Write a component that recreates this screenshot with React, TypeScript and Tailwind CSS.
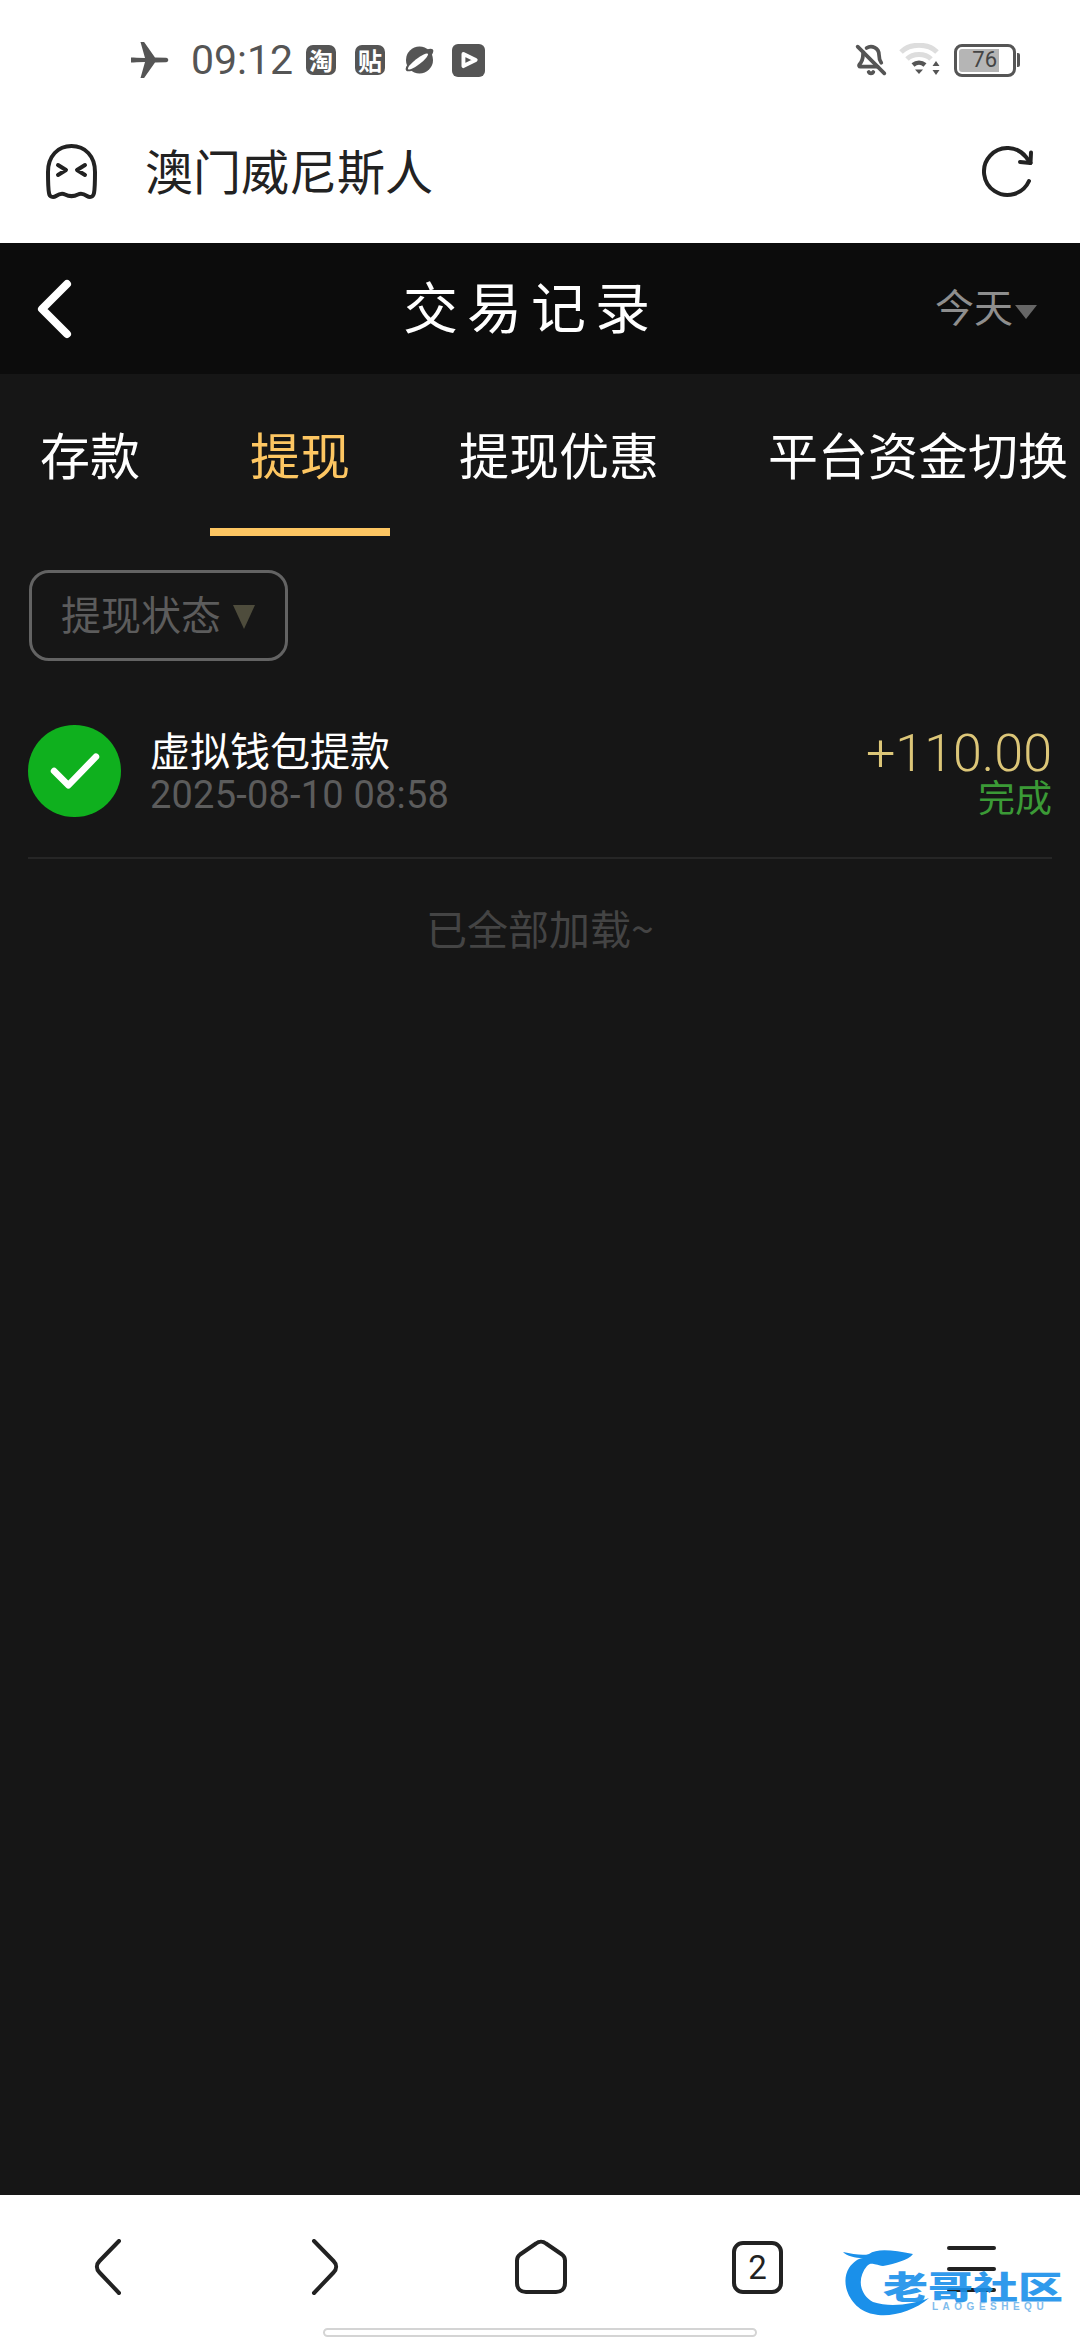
import React from 'react';
import { BellOff } from 'lucide-react';

const tabs = [
  { label: '存款', className: 'ml-[40px]' },
  { label: '提现', className: 'ml-[70px] w-[180px] justify-center', active: true },
  { label: '提现优惠', className: 'ml-[69px]' },
  { label: '平台资金切换', className: 'ml-[109px]' },
];

const StatusBar = () => (
  <div className="h-[100px] pt-[20px] flex items-center bg-white text-[#555555]">
    <svg className="ml-[131px] w-[38px] h-[36px]" viewBox="0 0 38 36" fill="#555555">
      <path d="M0 15.5h2.5l3 .2 8.5.3L9.5 0h3.6L24 15.6l11 .2c3 .1 3 4.300 0 4.400l-11 .2L13.100 36H9.500l4.500-16-8.500.3-3 .2H0z" />
    </svg>
    <span className="ml-[22px] w-[101px] text-[41px] leading-none font-['Roboto',sans-serif] whitespace-nowrap">09:12</span>
    <span className="ml-[14px] w-[30px] h-[30px] rounded-[7px] bg-[#555555] text-white text-[24px] leading-[30px] font-bold text-center font-['Noto_Sans_CJK_SC',sans-serif]">淘</span>
    <span className="ml-[19px] w-[30px] h-[30px] rounded-[7px] bg-[#555555] text-white text-[24px] leading-[30px] font-bold text-center font-['Noto_Sans_CJK_SC',sans-serif]">贴</span>
    <svg className="ml-[18px] w-[33px] h-[30px]" viewBox="0 0 33 30">
      <circle cx="16.500" cy="15" r="13.500" fill="#555555" />
      <ellipse cx="16.500" cy="15" rx="17" ry="5.500" transform="rotate(-38 16.500 15)" fill="#555555" />
      <ellipse cx="15" cy="16.500" rx="12.500" ry="3" transform="rotate(-38 15 16.500)" fill="#ffffff" />
    </svg>
    <div className="ml-[16px] w-[33px] h-[33px] rounded-[6px] bg-[#555555] flex items-center justify-center">
      <svg className="w-[20px] h-[20px]" viewBox="0 0 18 18">
        <path d="M4 3.500 15 9 4 14.500z" fill="#555555" stroke="#ffffff" strokeWidth="3.500" strokeLinejoin="round" />
      </svg>
    </div>
    <BellOff className="ml-auto w-[32px] h-[34px]" strokeWidth={2.8} color="#555555" />
    <svg className="ml-[12px] w-[44px] h-[34px]" viewBox="0 0 44 34" fill="none">
      <path d="M2 9C11 0 29 0 38 9" stroke="#dddddd" strokeWidth="5" />
      <path d="M8 16C14 10 26 10 32 16" stroke="#dddddd" strokeWidth="5" />
      <path d="M14 22C17.500 19 22.500 19 26 22" stroke="#555555" strokeWidth="4.500" />
      <path d="M16 26.500h8L20 31z" fill="#555555" />
      <path d="M37 18l3.500 5h-7zM37 32l3.500-5h-7z" fill="#555555" />
    </svg>
    <div className="ml-[11px] mr-[60px] flex items-center">
      <div className="w-[62px] h-[33px] rounded-[8px] border-[3px] border-[#555555] p-[2px] flex">
        <div className="w-[40px] h-full bg-[#b5b5b5] rounded-l-[3px] flex items-center justify-end">
          <span className="text-[22px] leading-none text-[#444444] font-['Roboto',sans-serif] pr-[2px]">76</span>
        </div>
      </div>
      <div className="ml-[1px] w-[3px] h-[14px] bg-[#555555] rounded-r-[2px]"></div>
    </div>
  </div>
);

const UrlBar = () => (
  <div className="h-[143px] flex items-center bg-white">
    <svg className="ml-[45px] w-[53px] h-[56px]" viewBox="0 0 53 56" fill="none" stroke="#222222" strokeWidth="4" strokeLinecap="round" strokeLinejoin="round">
      <path d="M3 28C3 12 13 2 26.500 2S50 12 50 28c0 10 0 16-1 21-.6 4-4 5-7 3-3-2-6-3-9-1.500-4 2-9 2-13 0-3-1.500-6-.5-9 1.500-3 2-6.500 1-7-3-1-5-1-11-1-21z" />
      <path d="M13 21l8 5-8 5M40 21l-8 5 8 5" />
    </svg>
    <span className="ml-[47px] pb-[5px] text-[48px] leading-none text-[#222222] font-['Noto_Sans_CJK_SC',sans-serif] whitespace-nowrap">澳门威尼斯人</span>
    <svg className="ml-auto mr-[46px] w-[52px] h-[52px]" viewBox="0 0 52 52" fill="none" stroke="#222222" strokeWidth="4" strokeLinecap="round" strokeLinejoin="round">
      <path d="M47 35A23.500 23.500 0 1 1 44 11L48.500 17" />
      <path d="M49 6.500 48.500 17 38 16" />
    </svg>
  </div>
);

const NavBar = () => (
  <div className="h-[131px] bg-[#0c0c0c] flex items-center">
    <svg className="ml-[36px] w-[36px] h-[60px]" viewBox="0 0 36 60" fill="none" stroke="#ffffff" strokeWidth="8" strokeLinecap="round" strokeLinejoin="round">
      <path d="M31 5 6 30l25 25" />
    </svg>
    <span className="ml-[331px] pb-[9px] text-[55px] leading-none tracking-[9px] text-white font-['Noto_Sans_CJK_SC',sans-serif] whitespace-nowrap">交易记录</span>
    <span className="ml-auto pb-[6px] text-[39px] leading-none text-[#8e8e8e] font-['Noto_Sans_CJK_SC',sans-serif]">今天</span>
    <div className="ml-[2px] mr-[43px] mt-[6px] w-0 h-0 border-x-[11px] border-x-transparent border-t-[14px] border-t-[#666666]"></div>
  </div>
);

const NavIcon = ({ d, className }: { d: string; className: string }) => (
  <svg className={className} viewBox="0 0 52 56" fill="none" stroke="#222222" strokeWidth="4" strokeLinecap="round" strokeLinejoin="round">
    <path d={d} />
  </svg>
);

const BottomBar = () => (
  <div className="relative h-[145px] bg-white">
    <div className="flex items-center h-[144px]">
      <NavIcon className="ml-[82px] w-[52px] h-[56px]" d="M37 2 17.500 22c-3.500 3.500-3.500 8 0 11.500L37 54" />
      <NavIcon className="ml-[165px] w-[52px] h-[56px]" d="M15 2l19.500 20c3.500 3.500 3.500 8 0 11.500L15 54" />
      <NavIcon className="ml-[164px] w-[52px] h-[56px]" d="M21 4.500 5 15.500C3 17 2 19 2 21.500V44c0 6 4 9 9 9h30c5 0 9-3 9-9V21.500c0-2.500-1-4.500-3-6L31 4.500c-3-2.500-7-2.500-10 0z" />
      <div className="ml-[165px] w-[51px] h-[53px] rounded-[11px] border-[4px] border-[#222222] flex items-center justify-center text-[33px] leading-none text-[#222222] font-['Roboto',sans-serif]">2</div>
      <div className="ml-[164px] mt-[4px] w-[49px] flex flex-col gap-[17px]">
        <div className="h-[4px] rounded-full bg-[#222222]"></div>
        <div className="h-[4px] rounded-full bg-[#222222]"></div>
        <div className="h-[4px] rounded-full bg-[#222222]"></div>
      </div>
    </div>
    <div className="absolute left-[323px] bottom-[3px] w-[434px] h-[9px] rounded-full bg-white border-[2px] border-[#d4d4d4]"></div>
    {/* watermark over the menu button */}
    <div className="absolute left-[843px] top-[49px] w-[220px] h-[72px]">
      <svg className="absolute inset-0 w-[90px] h-[72px]" viewBox="0 0 90 72">
        <path d="M0 8C10 10 20 12 26 10 34 4 50 6 70 10 66 16 50 20 40 22 30 20 28 18 24 22 14 34 16 50 30 58 48 64 70 60 86 54 70 68 46 74 30 70 8 66-4 40 6 24 10 18 16 14 20 14 12 14 4 12 0 8z" fill="#1a90ea" />
      </svg>
      <span className="absolute left-[40px] top-[19px] text-[45px] leading-none font-black text-[#1a90ea] whitespace-nowrap scale-y-[0.7] font-['Noto_Sans_CJK_SC',sans-serif] opacity-90">老哥社区</span>
      <span className="absolute left-[89px] top-[58px] text-[10px] leading-none font-bold tracking-[4.500px] text-[#7fbcec] whitespace-nowrap font-['Liberation_Sans',sans-serif]">LAOGESHEQU</span>
    </div>
  </div>
);

export default function App() {
  return (
    <div className="w-[1080px] h-[2340px] flex flex-col overflow-hidden bg-[#161616] font-['Roboto','Noto_Sans_CJK_SC',sans-serif]">
      <StatusBar />
      <UrlBar />
      <NavBar />

      <div className="flex-1 font-['Noto_Sans_CJK_SC',sans-serif]">
        <div className="h-[162px] flex whitespace-nowrap">
          {tabs.map((tab) => (
            <div
              key={tab.label}
              className={`relative flex items-center pb-[5px] text-[50px] leading-none ${tab.active ? 'text-[#fdc662]' : 'text-white'} ${tab.className}`}
            >
              {tab.label}
              {tab.active && <div className="absolute left-0 right-0 bottom-0 h-[8px] bg-[#fdc662]"></div>}
            </div>
          ))}
        </div>

        <div className="ml-[29px] mt-[34px] w-[259px] h-[91px] rounded-[20px] border-[3px] border-[#636363] flex items-center pl-[29px]">
          <span className="pb-[6px] text-[40px] leading-none text-[#5c5c5c] whitespace-nowrap">提现状态</span>
          <div className="ml-[12px] mt-[2px] w-0 h-0 border-x-[11px] border-x-transparent border-t-[24px] border-t-[#4e4c3c]"></div>
        </div>

        <div className="mx-[28px] mt-[64px] h-[134px] flex border-b-[2px] border-[#262626]">
          <div className="w-[93px] h-[92px] rounded-full bg-[#0fb01e] flex items-center justify-center">
            <svg className="w-[50px] h-[38px]" viewBox="0 0 52 40" fill="none" stroke="#ffffff" strokeWidth="7" strokeLinecap="round" strokeLinejoin="round">
              <path d="M4 20 19 35 48 5" />
            </svg>
          </div>
          <div className="ml-[29px] pt-[2px]">
            <div className="text-[40px] leading-[44px] text-white whitespace-nowrap">虚拟钱包提款</div>
            <div className="mt-[4px] text-[38px] leading-[40px] tracking-[0.2px] text-[#5c5c5c] whitespace-nowrap font-['Roboto',sans-serif]">2025-08-10 08:58</div>
          </div>
          <div className="ml-auto pt-[5px] flex flex-col items-end">
            <div className="text-[52px] leading-[48px] text-[#dcc678] font-light font-['Roboto',sans-serif] whitespace-nowrap">+110.00</div>
            <div className="text-[37px] leading-[36px] text-[#3b9a36] whitespace-nowrap">完成</div>
          </div>
        </div>

        <div className="mt-[46px] text-center text-[41px] leading-[44px] text-[#444444]">已全部加载~</div>
      </div>

      <BottomBar />
    </div>
  );
}
